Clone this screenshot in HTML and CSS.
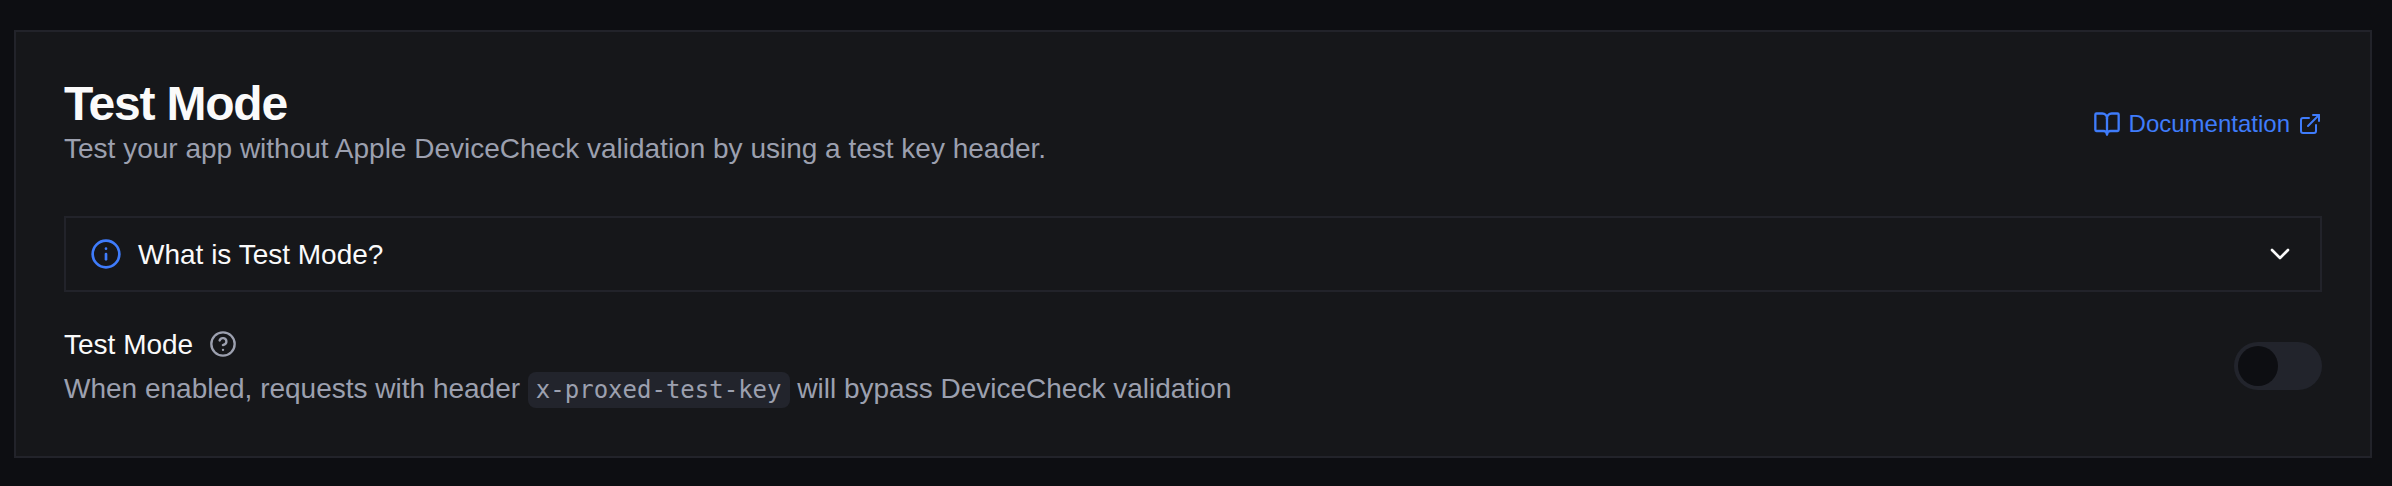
FILE: index.html
```html
<!DOCTYPE html>
<html lang="en">
<head>
<meta charset="utf-8">
<title>Test Mode</title>
<link rel="stylesheet" href="styles.css">
</head>
<body>
<section class="card">
  <header class="header">
    <div>
      <h2 class="title">Test Mode</h2>
      <p class="text muted intro">Test your app without Apple DeviceCheck validation by using a test key header.</p>
    </div>
    <a class="docs">
      <svg class="icon icon-md" viewBox="0 0 24 24"><path d="M12 7v14"/><path d="M3 18a1 1 0 0 1-1-1V4a1 1 0 0 1 1-1h5a4 4 0 0 1 4 4 4 4 0 0 1 4-4h5a1 1 0 0 1 1 1v13a1 1 0 0 1-1 1h-6a3 3 0 0 0-3 3 3 3 0 0 0-3-3z"/></svg>
      <span class="docs-label">Documentation</span>
      <svg class="icon icon-sm" viewBox="0 0 24 24"><path d="M15 3h6v6"/><path d="M10 14 21 3"/><path d="M18 13v6a2 2 0 0 1-2 2H5a2 2 0 0 1-2-2V8a2 2 0 0 1 2-2h6"/></svg>
    </a>
  </header>
  <div class="alert">
    <svg class="icon icon-lg blue" viewBox="0 0 24 24"><circle cx="12" cy="12" r="10"/><path d="M12 16v-4"/><path d="M12 8h.01"/></svg>
    <span class="text alert-label">What is Test Mode?</span>
    <svg class="icon icon-lg" viewBox="0 0 24 24"><path d="m6 9 6 6 6-6"/></svg>
  </div>
  <div class="setting">
    <div class="setting-body">
      <div class="setting-name">
        <span class="text">Test Mode</span>
        <svg class="icon icon-md muted" viewBox="0 0 24 24"><circle cx="12" cy="12" r="10"/><path d="M9.09 9a3 3 0 0 1 5.83 1c0 2-3 3-3 3"/><path d="M12 17h.01"/></svg>
      </div>
      <p class="text muted">When enabled, requests with header <code class="code">x-proxed-test-key</code> will bypass DeviceCheck validation</p>
    </div>
    <div class="switch"><div class="thumb"></div></div>
  </div>
</section>
</body>
</html>
```
FILE: styles.css
```css
* { box-sizing: border-box; }
body {
  margin: 0;
  padding: 30px 20px 28px 14px;
  min-height: 486px;
  background: #0d0e12;
  color: #fafafa;
  font-family: "Liberation Sans", Arial, sans-serif;
}
.card {
  display: flex;
  flex-direction: column;
  padding: 48px;
  border: 2px solid #22232a;
  background: #16171a;
}
.header {
  display: flex;
  justify-content: space-between;
  align-items: center;
  margin-bottom: 48px;
}
.title {
  margin: 0;
  font-size: 48px;
  line-height: 48px;
  font-weight: 700;
  letter-spacing: -1.2px;
}
.text {
  margin: 0;
  padding-top: 2px;
  font-size: 28px;
  line-height: 38px;
  white-space: nowrap;
}
.muted { color: #9ca0af; }
.docs {
  display: flex;
  align-items: center;
  gap: 8px;
  color: #3f7cfb;
  font-size: 24px;
  line-height: 32px;
}
.icon {
  display: block;
  flex: none;
  fill: none;
  stroke: currentColor;
  stroke-width: 2;
  stroke-linecap: round;
  stroke-linejoin: round;
}
.icon-sm { width: 24px; height: 24px; }
.icon-md { width: 28px; height: 28px; }
.icon-lg { width: 32px; height: 32px; }
.blue { color: #3f7cfb; }
.alert {
  display: flex;
  align-items: center;
  gap: 16px;
  padding: 16px 24px;
  border: 2px solid #22232a;
  margin-bottom: 32px;
}
.alert-label { flex: 1; }
.setting {
  display: flex;
  align-items: center;
  justify-content: space-between;
}
.setting-body {
  display: flex;
  flex-direction: column;
  gap: 4px;
}
.setting-name {
  display: flex;
  align-items: center;
  gap: 16px;
}
.code {
  padding: 4px 8px;
  border-radius: 8px;
  background: #22242c;
  font-family: "DejaVu Sans Mono", Menlo, monospace;
  font-size: 24px;
  line-height: 1;
}
.switch {
  width: 88px;
  height: 48px;
  padding: 4px;
  border-radius: 24px;
  background: #22242c;
}
.thumb {
  width: 40px;
  height: 40px;
  border-radius: 50%;
  background: #0d0e12;
}
```
